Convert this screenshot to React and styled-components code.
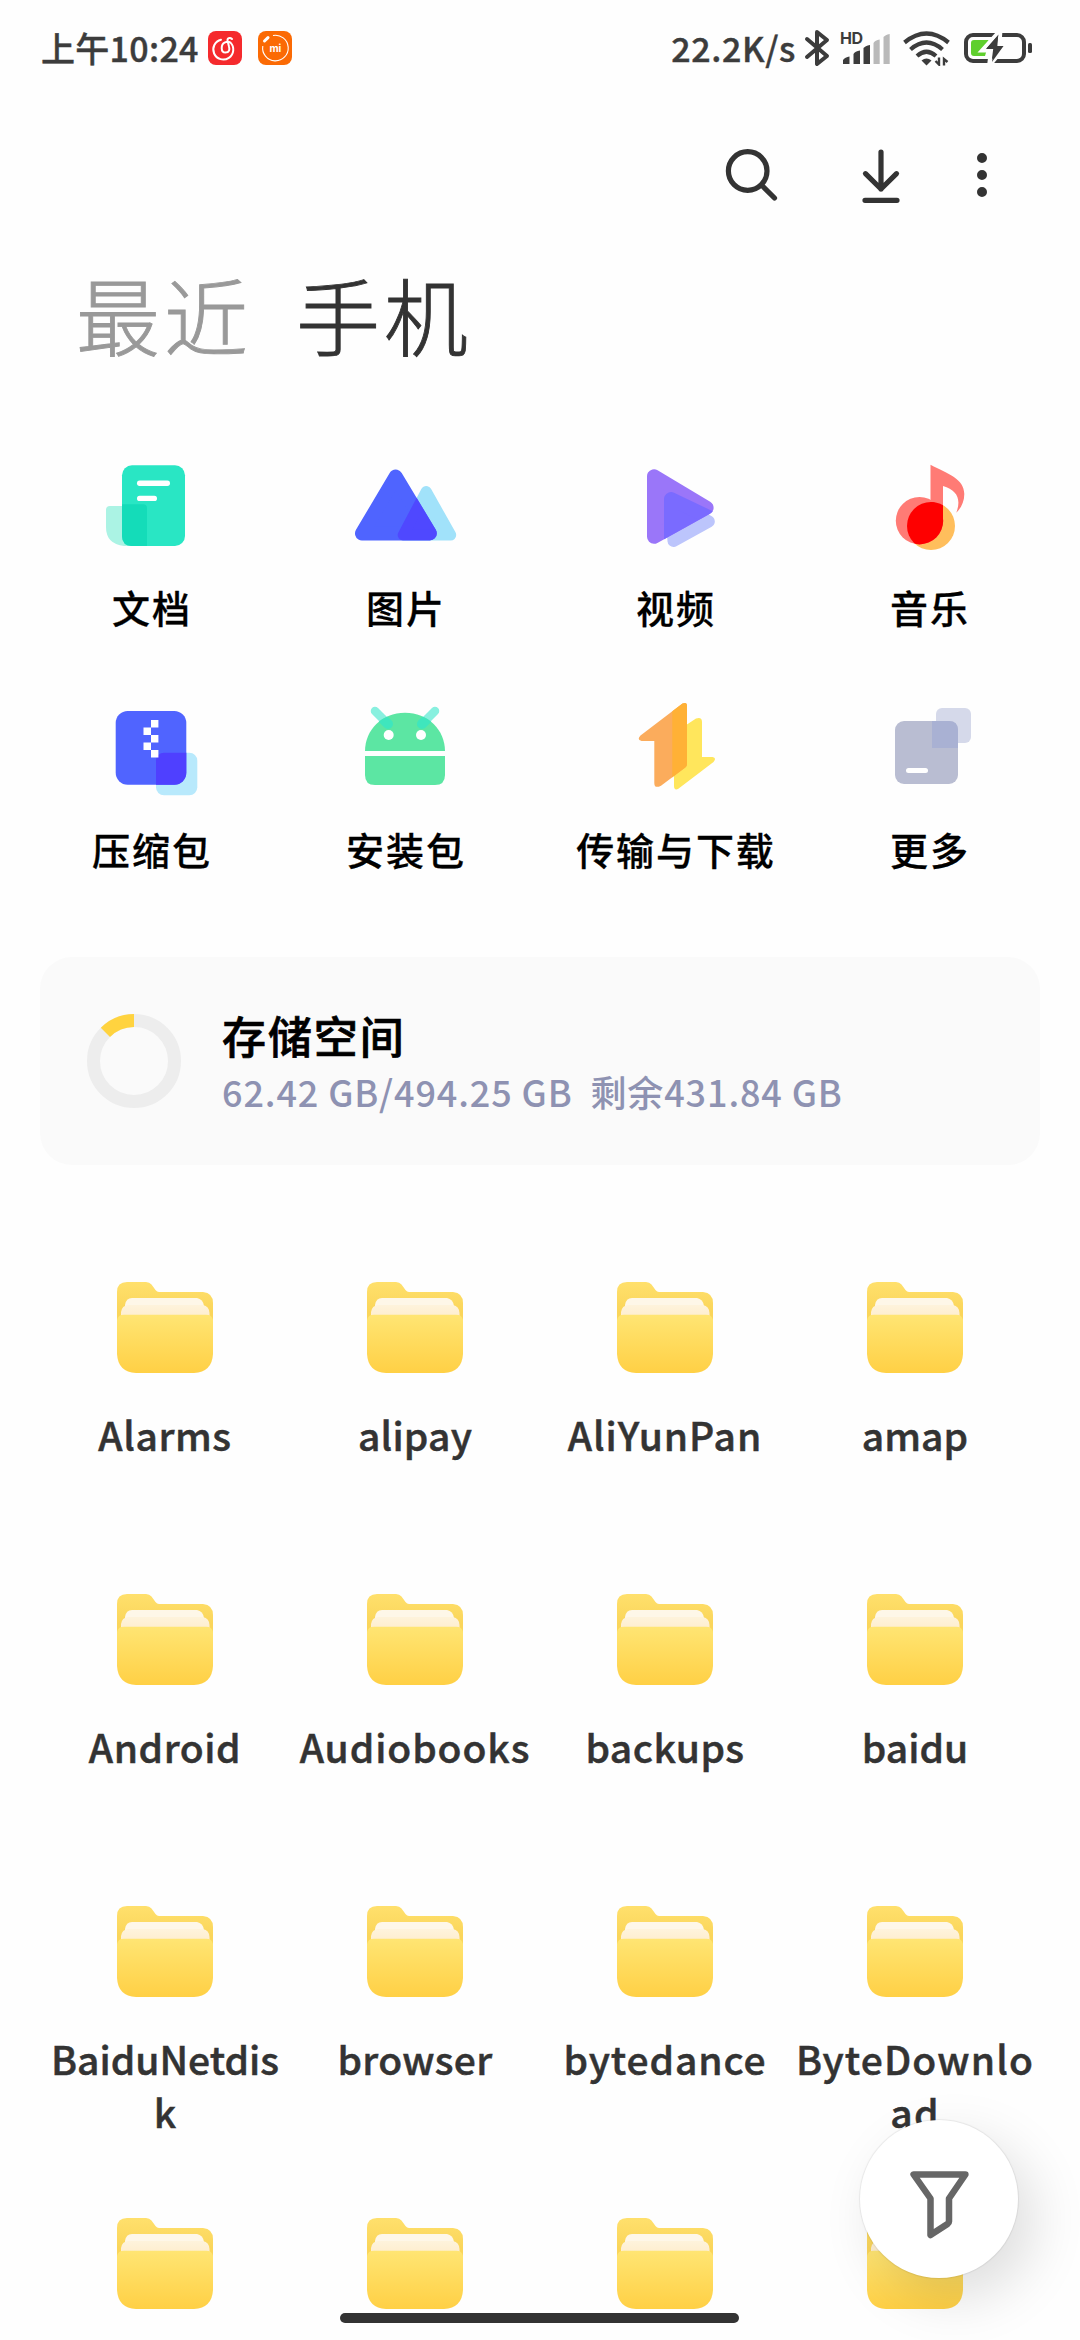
import React from "react";
import styled, { createGlobalStyle } from "styled-components";

const GlobalStyle = createGlobalStyle`
  * { box-sizing: border-box; }
  body {
    margin: 0;
    background: #fefefe;
    font-family: "Noto Sans CJK SC", "Noto Sans", sans-serif;
  }
`;

const Screen = styled.main`
  position: relative;
  width: 1080px;
  height: 2340px;
  overflow: hidden;
  background: #fefefe;
  display: flex;
  flex-direction: column;
`;

/* Status bar */
const StatusBar = styled.header`
  height: 96px;
  flex: none;
  padding: 0 47px 0 41px;
  display: flex;
  align-items: center;
  color: #3c3c3c;
`;
const Clock = styled.span`
  font-size: 34px;
  font-weight: 500;
  line-height: 50px;
  letter-spacing: ${(p) => p.$tracking};
  white-space: nowrap;
  -webkit-text-stroke: 0.4px #3c3c3c;
`;
const AppBadges = styled.div`
  display: flex;
  gap: 16px;
  margin-left: 9px;
`;
const StatusRight = styled.div`
  display: flex;
  align-items: center;
  margin-left: auto;
`;
const StatusIcon = styled.svg`
  display: block;
  flex: none;
  margin-left: ${(p) => p.$gap || 0}px;
`;

/* Toolbar */
const Toolbar = styled.nav`
  height: 158px;
  flex: none;
  padding-right: 68px;
  display: flex;
  align-items: center;
  justify-content: flex-end;
`;
const ToolButton = styled.button`
  border: 0;
  padding: 0;
  background: none;
  width: 60px;
  height: 60px;
  margin-left: ${(p) => p.$gap || 0}px;
  svg {
    display: block;
    fill: none;
    stroke: #333;
    stroke-width: ${(p) => p.$stroke || 5.2};
    stroke-linecap: round;
    stroke-linejoin: round;
  }
`;

/* Tabs */
const Tabs = styled.div`
  display: flex;
  gap: 44px;
  flex: none;
  margin-top: 10px;
  padding-left: 76px;
`;
const Tab = styled.span`
  font-size: 84px;
  line-height: 100px;
  font-weight: 300;
  letter-spacing: 4px;
  color: ${(p) => (p.$active ? "#333" : "#999")};
  -webkit-text-stroke: 0.9px ${(p) => (p.$active ? "#333" : "#999")};
`;

/* Categories */
const Categories = styled.section`
  flex: none;
  display: grid;
  grid-template-columns: 254px 254px 286px 222px;
  row-gap: 65px;
  margin-top: 91px;
  padding-left: 24px;
`;
const Category = styled.div`
  display: flex;
  flex-direction: column;
  align-items: center;
  gap: 27px;
`;
const CategoryIcon = styled.svg`
  display: block;
  width: 120px;
  height: 100px;
`;
const CategoryLabel = styled.span`
  font-size: 38px;
  line-height: 50px;
  font-weight: 500;
  letter-spacing: 1.9px;
  margin-right: -1.9px;
  color: #000;
  white-space: nowrap;
  -webkit-text-stroke: 0.3px #000;
`;

/* Storage card */
const StorageCard = styled.section`
  flex: none;
  height: 208px;
  margin: 83px 40px 0;
  padding-left: 47px;
  border-radius: 32px;
  background: #fafafa;
  display: flex;
  align-items: center;
`;
const StorageText = styled.div`
  display: flex;
  flex-direction: column;
  margin: 2px 0 0 41px;
`;
const StorageTitle = styled.h2`
  margin: 0;
  font-size: 44px;
  line-height: 58px;
  font-weight: 500;
  letter-spacing: 1.9px;
  color: #000;
  -webkit-text-stroke: 0.7px #000;
`;
const StorageDetail = styled.p`
  margin: 0;
  font-size: 36px;
  line-height: 54px;
  font-weight: 500;
  letter-spacing: 0.87px;
  color: #8e92b2;
  white-space: pre;
`;

/* Folders */
const Folders = styled.section`
  flex: none;
  display: grid;
  grid-template-columns: repeat(4, 250px);
  grid-auto-rows: 312px;
  margin: 117px 40px 0;
`;
const Folder = styled.div`
  display: flex;
  flex-direction: column;
  align-items: center;
`;
const FolderName = styled.span`
  width: 244px;
  margin-top: 35px;
  font-size: 39px;
  line-height: 53px;
  font-weight: 500;
  text-align: center;
  word-break: break-all;
  letter-spacing: ${(p) => p.$tracking}px;
  color: #333;
  -webkit-text-stroke: 0.5px #333;
`;

/* Overlays */
const FilterButton = styled.button`
  position: absolute;
  left: 860px;
  top: 2120px;
  width: 158px;
  height: 158px;
  padding: 0;
  border: 0;
  border-radius: 50%;
  background: #fff;
  box-shadow: 0 0 1px 1px rgba(0, 0, 0, 0.07), 16px 20px 54px rgba(0, 0, 0, 0.13);
  svg { display: block; }
`;
const HomeIndicator = styled.div`
  position: absolute;
  left: 340px;
  top: 2313px;
  width: 399px;
  height: 10px;
  border-radius: 5px;
  background: #333;
`;

const MusicBadge = () => (
  <StatusIcon width="34" height="34" viewBox="0 0 34 34">
    <rect width="34" height="34" rx="8" fill="#f52a2d" />
    <g fill="none" stroke="#fff" strokeWidth="2" strokeLinecap="round">
      <path d="M13 8.800 A10 10 0 1 0 22.500 11.600 Q20 10 17 11.400 C12.500 13.500 12.600 21.300 17.400 21.600 C21.500 21.600 21.800 18.400 21 15.600 L19.600 10 C19 7 22 6 24 8" />
    </g>
  </StatusIcon>
);

const BadgeText = styled.text`
  font: 700 10px "Inter", sans-serif;
  fill: #fff;
`;
const MiBadge = () => (
  <StatusIcon width="34" height="34" viewBox="0 0 34 34">
    <rect width="34" height="34" rx="8" fill="#fb6a04" />
    <path d="M15 4.500 A12.800 12.800 0 1 1 4.800 15" fill="none" stroke="#fff" strokeWidth="1.1" />
    <path d="M6.500 10 L10 6.600" stroke="#fff" strokeWidth="3" strokeLinecap="round" />
    <BadgeText x="17.3" y="21" textAnchor="middle">mi</BadgeText>
  </StatusIcon>
);

const HdText = styled.text`
  font: 700 16px "Inter", sans-serif;
  fill: #3c3c3c;
`;

const StatusIcons = () => (
  <>
    <StatusIcon $gap={8} width="26" height="40" viewBox="0 0 26 40">
      <path d="M3 11 L23 28 L13 36 V4 L23 12 L3 29" fill="none" stroke="#3c3c3c" strokeWidth="4" strokeLinejoin="round" strokeLinecap="round" />
    </StatusIcon>
    <StatusIcon $gap={9} width="52" height="52" viewBox="-1 -8 52 52">
      <HdText x="0" y="13.500" textLength="23">HD</HdText>
      <g fill="#3c3c3c">
        <path d="M3 34 V30 Q5 27 9.500 26.500 V34 Z" />
        <path d="M13.500 34 V24 Q15 21 20 20.500 V34 Z" />
        <path d="M23.500 34 V18.500 Q25 15.500 30 15 V34 Z" />
      </g>
      <g fill="#b9b9b9">
        <path d="M33.500 34 V13 Q35 10 39.700 9.500 V34 Z" />
        <path d="M43.500 34 V7.500 Q45 4.500 49.700 4 V34 Z" />
      </g>
    </StatusIcon>
    <StatusIcon $gap={12} width="48" height="36" viewBox="0 0 48 36">
      <g fill="none" stroke="#3c3c3c" strokeWidth="4.2">
        <path d="M1.500 12.500 Q23.500 -5.500 45.500 12.500" />
        <path d="M7.500 19.500 Q23.500 5.500 39.500 19.500" />
        <path d="M14 26 Q23.500 17.500 33 26" />
      </g>
      <path d="M18.500 30.500 Q23.500 26.500 28.500 30.500 L23.500 35.500 Z" fill="#3c3c3c" />
      <path d="M32.500 31 L36 34.500 V27.500 M41 35.500 V29 L44.500 32" fill="none" stroke="#3c3c3c" strokeWidth="2.4" />
    </StatusIcon>
    <StatusIcon $gap={13} width="69" height="36" viewBox="0 0 69 36">
      <rect x="2" y="5" width="58" height="26" rx="7" fill="none" stroke="#3c3c3c" strokeWidth="4" />
      <path d="M7 13 Q7 10 10 10 H25 L19 19 H23 L21 26 H10 Q7 26 7 23 Z" fill="#5fcf2d" />
      <path d="M36.500 0 L18 20.500 H27 L25 36 L43.500 14 H35.500 Z" fill="#3c3c3c" stroke="#fefefe" strokeWidth="4" />
      <path d="M34.500 4.500 L22 19 H30 L28 32 L39.500 16 H32.500 Z" fill="#3c3c3c" />
      <rect x="64" y="13" width="4" height="10" rx="1.500" fill="#3c3c3c" />
    </StatusIcon>
  </>
);

const musicNote =
  "M61.500 9.700 C79 19 95.300 23.500 95.300 39 C95.300 47 92 53 87.300 57.700 C92.500 44 88 35 74 31 V66 H61.500 Z";
const upArrow =
  "M67.500 6.600 Q72 4.500 72 9 V67 Q72 69 70.300 70.500 L46 88.700 Q39.300 92 39.300 86 V44 H26.500 Q21.500 43 25.500 38.500 Z";

const icons = {
  doc: (
    <>
      <path d="M19 51 H40 V91 H33 Q15 89 15 72 V55 Q15 51 19 51 Z" fill="#abf3e4" />
      <rect x="31" y="10.300" width="63" height="80.700" rx="10" fill="#29e6c4" />
      <path d="M31 49.300 H52 Q56 49.300 56 53 V91 H41 Q31 91 31 81 Z" fill="#14dcb9" />
      <rect x="46" y="25.600" width="33" height="5.300" rx="2.600" fill="#fff" />
      <rect x="46" y="40.800" width="20" height="5.300" rx="2.600" fill="#fff" />
    </>
  ),
  picture: (
    <>
      <mask id="picMask" maskUnits="userSpaceOnUse" x="0" y="0" width="120" height="100">
        <path d="M50.700 21.500 L17 78.400 H84.800 Z" fill="#fff" stroke="#fff" strokeWidth="14" strokeLinejoin="round" />
      </mask>
      <path d="M81.200 36.500 L58.200 80 H105.700 Z" fill="#a1e2fa" stroke="#a1e2fa" strokeWidth="11" strokeLinejoin="round" />
      <path d="M50.700 21.500 L17 78.400 H84.800 Z" fill="#4f64ff" stroke="#4f64ff" strokeWidth="14" strokeLinejoin="round" />
      <g mask="url(#picMask)">
        <path d="M81.200 36.500 L58.200 80 H105.700 Z" fill="#4f48ff" stroke="#4f48ff" strokeWidth="11" strokeLinejoin="round" />
      </g>
    </>
  ),
  video: (
    <>
      <mask id="vidMask" maskUnits="userSpaceOnUse" x="0" y="0" width="120" height="100">
        <path d="M39 21.200 V81.800 L91.600 52.700 Z" fill="#fff" stroke="#fff" strokeWidth="14" strokeLinejoin="round" />
      </mask>
      <path d="M55 44 L58.500 86 L93.800 66.500 Z" fill="#bcc5fc" stroke="#bcc5fc" strokeWidth="12" strokeLinejoin="round" />
      <path d="M39 21.200 V81.800 L91.600 52.700 Z" fill="#9a76f9" stroke="#9a76f9" strokeWidth="14" strokeLinejoin="round" />
      <g mask="url(#vidMask)">
        <path d="M56 44 V92 L103 66.500 Z" fill="#7a6bff" stroke="#7a6bff" strokeWidth="14" strokeLinejoin="round" />
      </g>
    </>
  ),
  music: (
    <>
      <clipPath id="noteClip"><circle cx="62" cy="71" r="24" /></clipPath>
      <circle cx="62" cy="71" r="24" fill="#ffbe5c" />
      <g fill="#ff7b75">
        <circle cx="50.500" cy="65.700" r="23.700" />
        <path d={musicNote} />
      </g>
      <g fill="#fe0000" clipPath="url(#noteClip)">
        <circle cx="50.500" cy="65.700" r="23.700" />
        <path d={musicNote} />
      </g>
    </>
  ),
  archive: (
    <>
      <clipPath id="zipClip"><rect x="24.700" y="14" width="70.600" height="73.700" rx="12" /></clipPath>
      <rect x="65" y="55.700" width="41.300" height="42.600" rx="8" fill="#b8e9fc" />
      <rect x="24.700" y="14" width="70.600" height="73.700" rx="12" fill="#5064ff" />
      <rect x="65" y="55.700" width="41.300" height="42.600" rx="8" fill="#4f40ff" clipPath="url(#zipClip)" />
      <path d="M60 23h7.400v7.500h-7.400v7.500h7.400v7.400h-7.400v7.500h7.400v7.600h-7.400v-7.600h-7.500v-7.500h7.500v-7.400h-7.500v-7.500h7.500z" fill="#fff" />
    </>
  ),
  android: (
    <>
      <clipPath id="domeClip"><path d="M20 54 C20 33 37 15.700 60 15.700 C83 15.700 100 33 100 54 Z" /></clipPath>
      <path d="M30 14 L44 28 M90 14 L76 28" stroke="#88f0df" strokeWidth="8.500" strokeLinecap="round" />
      <path d="M20 54 C20 33 37 15.700 60 15.700 C83 15.700 100 33 100 54 Z" fill="#5ce6a3" />
      <path d="M30 14 L43 27 M90 14 L77 27" stroke="#3fe6bd" strokeWidth="10" strokeLinecap="round" clipPath="url(#domeClip)" />
      <circle cx="43.700" cy="38" r="5" fill="#fff" />
      <circle cx="76" cy="38" r="5" fill="#fff" />
      <path d="M20 59 H100 V78 Q100 88 90 88 H30 Q20 88 20 78 Z" fill="#5ce6a3" />
    </>
  ),
  transfer: (
    <>
      <clipPath id="arrowClip"><rect x="57.300" y="0" width="40" height="100" /></clipPath>
      <path d="M59 36 L81 21.500 Q87 19.500 87 25 V60 H97.500 Q102 61 98.500 65 L63 92 Q59 93.500 59 89 Z" fill="#ffe65c" />
      <path d={upArrow} fill="#fbac5c" />
      <path d={upArrow} fill="#ffb136" clipPath="url(#arrowClip)" />
    </>
  ),
  more: (
    <>
      <rect x="67" y="11" width="35" height="35" rx="6" fill="#d5d9ea" />
      <rect x="26" y="24" width="63" height="63" rx="9" fill="#b9bdd2" />
      <path d="M63 24 H80 Q89 24 89 33 V51 H63 Z" fill="#a9b1d3" />
      <rect x="37" y="71" width="22" height="5" rx="2.500" fill="#fff" />
    </>
  ),
};

const categories = [
  ["doc", "文档"],
  ["picture", "图片"],
  ["video", "视频"],
  ["music", "音乐"],
  ["archive", "压缩包"],
  ["android", "安装包"],
  ["transfer", "传输与下载"],
  ["more", "更多"],
];

const folders = [
  ["Alarms", 0.6], ["alipay", 0.2], ["AliYunPan", 0.95], ["amap", 0.1],
  ["Android", 0.55], ["Audiobooks", 0.9], ["backups", 0.5], ["baidu", 0],
  ["BaiduNetdisk", 0], ["browser", 0.3], ["bytedance", 0.9], ["ByteDownload", 1.15],
  ["", 0], ["", 0], ["", 0], ["", 0],
];

const FolderIcon = () => (
  <svg width="96" height="91" viewBox="0 0 96 91">
    <defs>
      <linearGradient id="folderBack" x1="0" y1="0" x2="0" y2="1">
        <stop offset="0" stopColor="#ffe06c" />
        <stop offset="0.5" stopColor="#fad55a" />
      </linearGradient>
      <linearGradient id="folderFront" x1="0" y1="0" x2="0" y2="1">
        <stop offset="0" stopColor="#ffe573" />
        <stop offset="1" stopColor="#ffd045" />
      </linearGradient>
      <linearGradient id="paper" x1="0" y1="0" x2="0" y2="1">
        <stop offset="0" stopColor="#fef3dc" />
        <stop offset="1" stopColor="#feecca" />
      </linearGradient>
    </defs>
    <path d="M0 10 Q0 0 10 0 H29 Q32.500 0 34.500 2.500 L38.500 8 Q40 10 42 10 H86 Q96 11 96 21 V60 H0 Z" fill="url(#folderBack)" />
    <path d="M8 26 V23 Q9 16 15 16 H80 Q86 17 87 24 V36 H8 Z" fill="#fef7e8" />
    <path d="M4 36 V30 Q5 23.500 11 23 H86 Q92 24 92.500 31 V38 H4 Z" fill="url(#paper)" />
    <path d="M0 38 Q1 32.700 7 32.700 H89 Q95 32.700 96 38 V72 Q95 90 77 91 H19 Q1 90 0 72 Z" fill="url(#folderFront)" />
  </svg>
);

export default function App() {
  return (
    <Screen>
      <GlobalStyle />
      <StatusBar>
        <Clock $tracking="0.3px">上午10:24</Clock>
        <AppBadges>
          <MusicBadge />
          <MiBadge />
        </AppBadges>
        <StatusRight>
          <Clock $tracking="0.6px">22.2K/s</Clock>
          <StatusIcons />
        </StatusRight>
      </StatusBar>

      <Toolbar>
        <ToolButton aria-label="搜索">
          <svg width="60" height="60">
            <circle cx="25.700" cy="26" r="19.300" />
            <path d="M40.500 41 L52.500 53" />
          </svg>
        </ToolButton>
        <ToolButton $gap={69} aria-label="下载">
          <svg width="60" height="60">
            <path d="M30 7 V44 M14.500 28.700 L30 44 L45.500 28.700 M14 55.300 H46" />
          </svg>
        </ToolButton>
        <ToolButton $gap={41} $stroke={10} aria-label="菜单">
          <svg width="60" height="60">
            <path d="M30 13 V13.010 M30 30 V30.010 M30 47 V47.010" />
          </svg>
        </ToolButton>
      </Toolbar>

      <Tabs>
        <Tab>最近</Tab>
        <Tab $active>手机</Tab>
      </Tabs>

      <Categories>
        {categories.map(([key, label]) => (
          <Category key={key}>
            <CategoryIcon viewBox="0 0 120 100" fill="none">{icons[key]}</CategoryIcon>
            <CategoryLabel>{label}</CategoryLabel>
          </Category>
        ))}
      </Categories>

      <StorageCard>
        <svg width="94" height="94" viewBox="0 0 94 94" fill="none" strokeWidth="13">
          <circle cx="47" cy="47" r="40.500" stroke="#ededed" />
          <path d="M18.400 18.400 A40.500 40.500 0 0 1 47 6.500" stroke="#ffd33f" />
        </svg>
        <StorageText>
          <StorageTitle>存储空间</StorageTitle>
          <StorageDetail>62.42 GB/494.25 GB  剩余431.84 GB</StorageDetail>
        </StorageText>
      </StorageCard>

      <Folders>
        {folders.map(([name, tracking], i) => (
          <Folder key={i}>
            <FolderIcon />
            {name && <FolderName $tracking={tracking}>{name}</FolderName>}
          </Folder>
        ))}
      </Folders>

      <FilterButton aria-label="筛选">
        <svg width="158" height="158" fill="none" stroke="#666" strokeWidth="6.500" strokeLinejoin="round">
          <path d="M53.600 54.500 H105.400 L89 78.500 V101.500 Q89 103 87.500 104 L70.500 115 V78.500 Z" />
        </svg>
      </FilterButton>
      <HomeIndicator />
    </Screen>
  );
}
